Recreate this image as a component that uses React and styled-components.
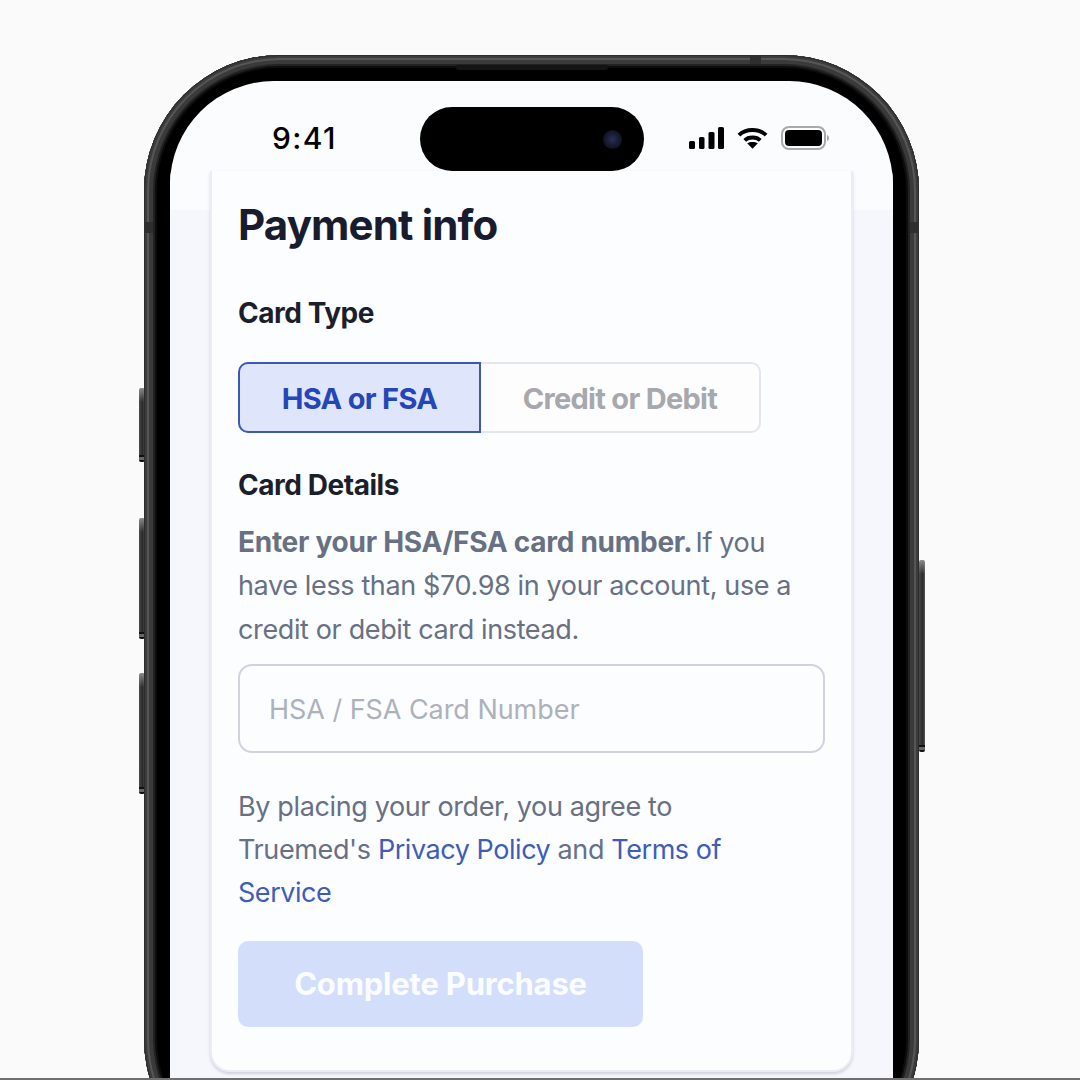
import React from 'react';
import styled, { createGlobalStyle } from 'styled-components';

const GlobalStyle = createGlobalStyle`
  html, body {
    margin: 0;
    padding: 0;
    background: #fafafa;
  }
  * {
    box-sizing: border-box;
  }
`;

export default function App() {
  return (
    <>
      <GlobalStyle />
      <Page>
        <Phone>
          <SideButton $side="left" $top={333} $height={74} />
          <SideButton $side="left" $top={463} $height={121} />
          <SideButton $side="left" $top={618} $height={121} />
          <SideButton $side="right" $top={505} $height={192} />
          <Bezel>
            <Speaker />
            <AntennaBand $edge="top" />
            <AntennaBand $edge="left" />
            <AntennaBand $edge="right" />
            <Screen>
              <StatusBar>
                <Time>9:41</Time>
                <Island>
                  <Camera />
                </Island>
                <StatusIcons>
                  <svg width="35" height="22" viewBox="0 0 35 22" fill="#000">
                    <rect x="0" y="14" width="6" height="8" rx="1.5" />
                    <rect x="10" y="10" width="5.5" height="12" rx="1.5" />
                    <rect x="19.5" y="5" width="6" height="17" rx="1.5" />
                    <rect x="29" y="0" width="6" height="22" rx="1.5" />
                  </svg>
                  <svg width="31" height="22" viewBox="0 0 32 22" fill="none" stroke="#000" strokeWidth="4">
                    <path d="M2 8 C9 1 23 1 30 8" />
                    <path d="M8 13.5 C12 9.5 20 9.5 24 13.5" />
                    <path d="M16 22 L10.5 16.5 C13.5 14.5 18.5 14.5 21.5 16.5 Z" fill="#000" stroke="none" />
                  </svg>
                  <svg width="48" height="24" viewBox="0 0 48 24">
                    <rect x="1" y="1" width="43" height="22" rx="7" fill="none" stroke="#a9a9a9" strokeWidth="2" />
                    <rect x="4" y="4" width="37" height="16" rx="4" fill="#000" />
                    <path d="M46 9 C47.5 9.5 48 10.5 48 12 C48 13.5 47.5 14.5 46 15 Z" fill="#a9a9a9" />
                  </svg>
                </StatusIcons>
              </StatusBar>
              <Backdrop>
                <Card>
                  <Title>Payment info</Title>
                  <SectionLabel $mt={49}>Card Type</SectionLabel>
                  <Toggle>
                    <ToggleOption $active>HSA or FSA</ToggleOption>
                    <ToggleOption>Credit or Debit</ToggleOption>
                  </Toggle>
                  <SectionLabel $mt={36}>Card Details</SectionLabel>
                  <BodyText $mt={20}>
                    <strong>Enter your HSA/FSA card number.</strong> If you have less than $70.98 in your
                    account, use a credit or debit card instead.
                  </BodyText>
                  <CardInput placeholder="HSA / FSA Card Number" readOnly />
                  <BodyText $mt={32}>
                    By placing your order, you agree to Truemed's <Link>Privacy Policy</Link> and{' '}
                    <Link>Terms of Service</Link>
                  </BodyText>
                  <PurchaseButton>Complete Purchase</PurchaseButton>
                </Card>
              </Backdrop>
            </Screen>
          </Bezel>
        </Phone>
      </Page>
    </>
  );
}

const FONT = `Inter, "Liberation Sans", sans-serif`;

const Page = styled.div`
  width: 1080px;
  height: 1080px;
  padding-top: 55px;
  background: #fafafa;
  border-bottom: 2px solid #6f6f6f;
  overflow: hidden;
  font-family: ${FONT};
`;

const Phone = styled.div`
  position: relative;
  width: 775px;
  height: 1120px;
  margin-left: 144px;
`;

const SideButton = styled.div`
  position: absolute;
  top: ${({ $top }) => $top}px;
  ${({ $side }) => ($side === 'left' ? 'left: -5px;' : 'right: -6px;')}
  width: 6px;
  height: ${({ $height }) => $height}px;
  border-radius: 2px;
  background:
    linear-gradient(180deg, #8a8a8a 0, transparent 14px),
    linear-gradient(0deg, #111 0, #111 2px, #666 2px, #666 5px, #111 5px, #111 7px, transparent 7px),
    linear-gradient(90deg, #4a4a4a, #2a2a2a 60%, #555);
`;

const Bezel = styled.div`
  position: relative;
  height: 100%;
  padding: 26px 26px 0 26px;
  border-radius: 136px;
  background: #000;
  box-shadow:
    inset 0 0 0 1px #2c2c2c,
    inset 0 0 0 3px #3c3c3c,
    inset 0 0 0 5px #565656,
    inset 0 0 0 9px #3a3a3a,
    inset 0 0 0 11px #222,
    inset 0 0 0 13px #0c0c0c;
`;

const Speaker = styled.div`
  position: absolute;
  top: 10px;
  left: 312px;
  width: 152px;
  height: 5px;
  border-radius: 2px;
  background: #141414;
`;

const AntennaBand = styled.div`
  position: absolute;
  background: #2e2e2e;
  ${({ $edge }) =>
    $edge === 'top'
      ? 'top: 0; left: 606px; width: 11px; height: 9px;'
      : `top: 167px; ${$edge}: 0; width: 9px; height: 11px;`}
`;

const Screen = styled.div`
  position: relative;
  display: flex;
  flex-direction: column;
  height: 100%;
  border-radius: 104px 104px 0 0;
  overflow: hidden;
  background: #fbfcfe;
`;

const StatusBar = styled.div`
  flex: none;
  position: relative;
  display: flex;
  align-items: center;
  justify-content: space-between;
  height: 90px;
  padding: 24px 64px 0 102px;
`;

const Time = styled.span`
  font-size: 30px;
  font-weight: 500;
  letter-spacing: 1.4px;
  color: #000;
`;

const Island = styled.div`
  position: absolute;
  top: 26px;
  left: 250px;
  width: 224px;
  height: 64px;
  border-radius: 32px;
  background: #000;
`;

const Camera = styled.div`
  position: absolute;
  top: 23px;
  right: 22px;
  width: 19px;
  height: 19px;
  border-radius: 50%;
  background: radial-gradient(circle, #2a2e52 0%, #14162a 60%, #05050a 100%);
`;

const StatusIcons = styled.div`
  display: flex;
  align-items: center;
  gap: 13px;
`;

const Backdrop = styled.div`
  flex: 1;
  padding: 0 40px;
  background: linear-gradient(180deg, #fbfcfe 0, #fbfcfe 39px, #f6f7fc 39px);
`;

const Card = styled.div`
  display: flex;
  flex-direction: column;
  align-items: flex-start;
  width: 643px;
  height: 901px;
  padding: 31px 26px 0;
  background: #fcfdff;
  border: 2px solid #ebedf6;
  border-top: none;
  border-radius: 0 0 20px 20px;
  box-shadow: 0 2px 3px rgba(120, 125, 150, 0.3);
`;

const Title = styled.h1`
  margin: 0;
  font-size: 42px;
  line-height: 46px;
  font-weight: 700;
  letter-spacing: -0.85px;
  color: #171c2f;
`;

const SectionLabel = styled.h2`
  margin: ${({ $mt }) => $mt}px 0 0;
  font-size: 28px;
  line-height: 32px;
  font-weight: 700;
  letter-spacing: -0.45px;
  color: #1c1f2b;
`;

const Toggle = styled.div`
  display: flex;
  width: 523px;
  height: 71px;
  margin-top: 33px;
`;

const ToggleOption = styled.div`
  display: flex;
  align-items: center;
  justify-content: center;
  padding-top: 1px;
  font-size: 29px;
  font-weight: 700;
  letter-spacing: -0.7px;
  ${({ $active }) =>
    $active
      ? `
    flex: 0 0 243px;
    color: #2546b8;
    background: #dfe6fb;
    border: 2px solid #3c58b4;
    border-radius: 10px 0 0 10px;
  `
      : `
    flex: 1;
    color: #a6a8ad;
    background: #fdfdfe;
    border: 2px solid #e4e6ee;
    border-left: none;
    border-radius: 0 10px 10px 0;
  `}
`;

const BodyText = styled.p`
  width: 560px;
  margin: ${({ $mt }) => $mt}px 0 0;
  font-size: 27px;
  line-height: 43.3px;
  letter-spacing: -0.37px;
  color: #687083;

  strong {
    margin-right: -4px;
    font-size: 28px;
    font-weight: 700;
    letter-spacing: -0.27px;
  }
`;

const Link = styled.span`
  color: #3f5cb8;
  letter-spacing: -0.45px;
`;

const CardInput = styled.input`
  display: block;
  width: 587px;
  height: 89px;
  margin-top: 13px;
  padding: 3px 29px 0;
  background: transparent;
  border: 2px solid #cfd3e0;
  border-radius: 14px;
  outline: none;
  font-family: ${FONT};
  font-size: 27px;
  letter-spacing: -0.05px;

  &::placeholder {
    color: #adb1bc;
  }
`;

const PurchaseButton = styled.button`
  width: 405px;
  height: 86px;
  margin-top: 26px;
  border: none;
  border-radius: 10px;
  background: #d3dffa;
  color: #fbfcff;
  font-family: ${FONT};
  font-size: 31px;
  font-weight: 700;
  letter-spacing: -0.2px;
`;
